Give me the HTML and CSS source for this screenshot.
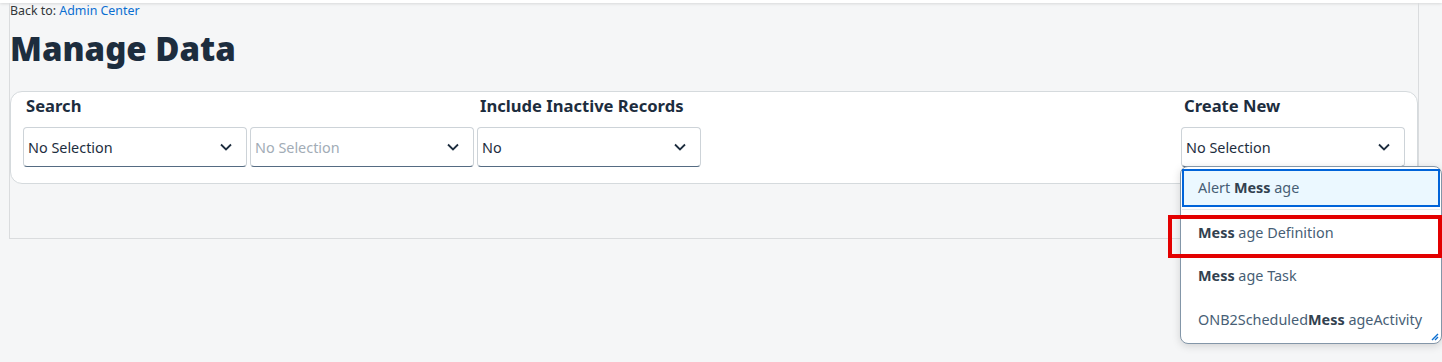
FILE: index.html
```html
<!DOCTYPE html>
<html lang="en">
<head>
    <meta charset="UTF-8">
    <meta name="viewport" content="width=device-width, initial-scale=1.0">
    <title>Manage Data</title>
    <link rel="stylesheet" href="styles.css">
</head>
<body>
    <div class="topbar"></div>
    <div class="page">
        <div class="backlink">Back to: <a href="#">Admin Center</a></div>
        <h1>Manage Data</h1>
        <div class="card">
            <div class="group">
                <label class="field-label">Search</label>
                <div class="row">
                    <div class="select">
                        <span>No Selection</span>
                        <svg class="chev" viewBox="0 0 14 14"><path d="M2 4.5l5 5 5-5" /></svg>
                    </div>
                    <div class="select">
                        <span class="placeholder">No Selection</span>
                        <svg class="chev" viewBox="0 0 14 14"><path d="M2 4.5l5 5 5-5" /></svg>
                    </div>
                </div>
            </div>
            <div class="group">
                <label class="field-label">Include Inactive Records</label>
                <div class="row">
                    <div class="select">
                        <span>No</span>
                        <svg class="chev" viewBox="0 0 14 14"><path d="M2 4.5l5 5 5-5" /></svg>
                    </div>
                </div>
            </div>
            <div class="group create">
                <label class="field-label">Create New</label>
                <div class="row">
                    <div class="select">
                        <span>No Selection</span>
                        <svg class="chev" viewBox="0 0 14 14"><path d="M2 4.5l5 5 5-5" /></svg>
                    </div>
                </div>
                <div class="popup">
                    <div class="item active">Alert <b>Mess</b> age</div>
                    <div class="item first">
                        <b>Mess</b> age Definition
                        <div class="marker"></div>
                    </div>
                    <div class="item"><b>Mess</b> age Task</div>
                    <div class="item">ONB2Scheduled<b>Mess</b> ageActivity</div>
                    <svg class="grip" viewBox="0 0 10 10"><path d="M9 3L3 9M9 6L6 9" /></svg>
                </div>
            </div>
        </div>
    </div>
</body>
</html>
```

FILE: styles.css
```css
html, body {
    min-height: 100vh;
}
body {
    margin: 0;
    background-color: #f5f6f7;
    font-family: "Noto Sans", Arial, sans-serif;
    color: #1d2d3e;
}
.topbar {
    height: 3px;
    background-color: #fff;
    box-shadow: 0 1px 3px rgba(0, 0, 0, 0.12);
}
.page {
    margin-left: 9px;
    width: 1408px;
    height: 235px;
    border: 1px solid #dadcde;
    border-top: none;
}
.backlink {
    font-size: 12.4px;
    line-height: 14px;
    padding-top: 1px;
    color: #32363a;
}
.backlink a {
    color: #0a6ed1;
    text-decoration: none;
}
h1 {
    margin: 11px 0 0 0;
    font-size: 33px;
    line-height: 40px;
    font-weight: 900;
    color: #1d2d3e;
}
.card {
    margin-top: 22px;
    height: 91px;
    background-color: #fff;
    border: 1px solid #d5dadd;
    border-radius: 12px;
    display: flex;
    gap: 3px;
    padding: 0 12px;
}
.group {
    display: flex;
    flex-direction: column;
    position: relative;
}
.create {
    margin-left: auto;
}
.field-label {
    font-size: 16.6px;
    font-weight: 700;
    line-height: 20px;
    margin-top: 4px;
    padding-left: 3px;
    color: #1d2d3e;
}
.row {
    display: flex;
    gap: 3px;
    margin-top: 11px;
}
.select {
    box-sizing: border-box;
    width: 224px;
    height: 40px;
    border: 1px solid #cdd3d8;
    border-bottom: 1px solid #556b82;
    border-radius: 4px;
    display: flex;
    align-items: center;
    justify-content: space-between;
    padding: 0 13px 0 4px;
    font-size: 14.4px;
    color: #1d2d3e;
}
.placeholder {
    color: #a2acb6;
}
.chev {
    width: 14px;
    height: 14px;
    fill: none;
    stroke: #1d2d3e;
    stroke-width: 1.8;
}
.popup {
    position: absolute;
    top: 74px;
    left: -1px;
    width: 258px;
    padding: 2px 1px 1px;
    background-color: #fff;
    border: 1px solid #8396a8;
    border-radius: 8px;
    box-shadow: 0 2px 8px rgba(0, 0, 0, 0.15);
    z-index: 2;
}
.item {
    position: relative;
    height: 44px;
    line-height: 44px;
    padding-left: 16px;
    font-size: 14.4px;
    color: #475e75;
    white-space: nowrap;
}
.item b {
    color: #32414f;
}
.item.active {
    box-sizing: border-box;
    height: 38px;
    line-height: 34px;
    border: 2px solid #0064d9;
    background-color: #ebf8ff;
    padding-left: 14px;
    margin-bottom: 2px;
}
.item.first {
    border-top: 1px solid #e5e9ec;
    line-height: 46px;
}
.marker {
    position: absolute;
    top: 5px;
    left: -14px;
    width: 266px;
    height: 35px;
    border: 4px solid #e30000;
}
.grip {
    position: absolute;
    right: 2px;
    bottom: 2px;
    width: 10px;
    height: 10px;
    fill: none;
    stroke: #0a6ed1;
    stroke-width: 1.4;
}
```
